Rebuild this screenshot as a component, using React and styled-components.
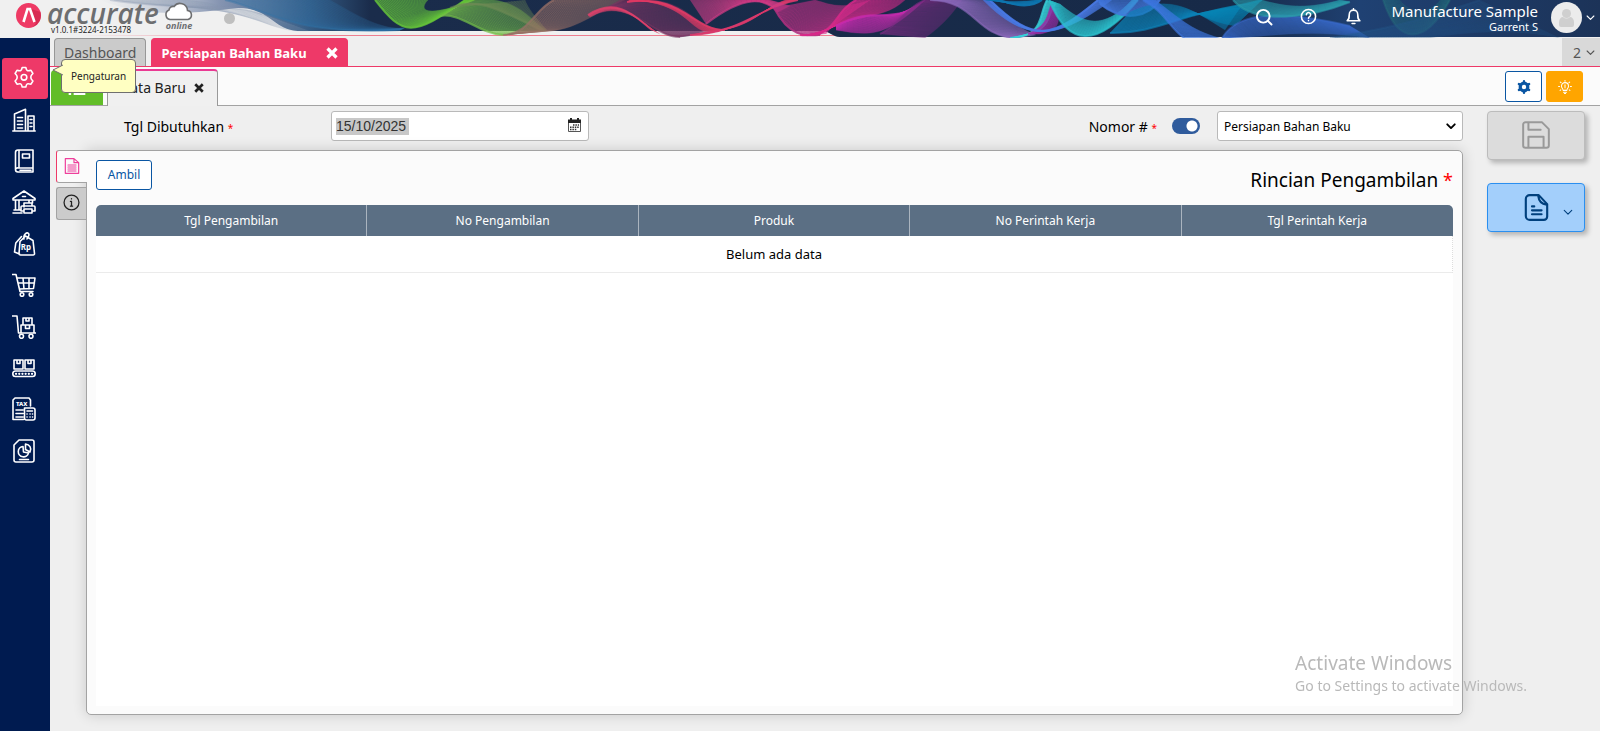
import React, { useState } from "react";
import styled, { createGlobalStyle } from "styled-components";

const colors = {
  navy: "#001b50",
  pink: "#ee3968",
  page: "#efefef",
  light: "#fbfbfb",
  line: "#a3a3a3",
  blue: "#0a56a3",
  slate: "#5b6f84",
};

const GlobalStyle = createGlobalStyle`
  * {
    box-sizing: border-box;
  }
  body {
    margin: 0;
    background: ${colors.page};
    font-family: "Noto Sans", "Open Sans", sans-serif;
    font-size: 14px;
    color: #000;
  }
  button, input, select {
    font: inherit;
    margin: 0;
  }
`;

/* ---------- header ---------- */

const Page = styled.div`
  min-height: 100vh;
  display: flex;
  flex-direction: column;
`;

const Header = styled.header`
  position: relative;
  height: 38px;
  display: flex;
  justify-content: space-between;
`;

const BannerArt = styled.svg`
  position: absolute;
  inset: 0;
  width: 100%;
  height: 38px;
`;

const Brand = styled.a`
  position: relative;
  display: flex;
  align-items: flex-start;
  padding: 3px 0 0 16px;
  color: #6d6e70;
  text-decoration: none;
`;

const BrandText = styled.div`
  padding-left: 5px;
  width: 120px;
`;

const BrandName = styled.div`
  font: italic 600 28px/22px "Open Sans", sans-serif;
  margin-top: -1px;
`;

const Version = styled.div`
  font-size: 8px;
  line-height: 12px;
  padding-left: 4px;
  color: #222;
`;

const BrandCloud = styled.div`
  width: 34px;
  display: flex;
  flex-direction: column;
  align-items: center;
  font: italic bold 9px/9px "Open Sans", sans-serif;
`;

const StatusDot = styled.span`
  width: 11px;
  height: 11px;
  margin: 10px 0 0 28px;
  border-radius: 50%;
  background: #bfbfbf;
`;

const HeaderTools = styled.div`
  position: relative;
  display: flex;
  align-items: center;
  padding-right: 5px;
  color: #fff;
`;

const ToolButton = styled.button`
  width: 45px;
  height: 32px;
  margin-bottom: 5px;
  padding: 0;
  display: grid;
  place-items: center;
  border: 0;
  background: none;
  color: #fff;
  cursor: pointer;
`;

const Account = styled.button`
  display: flex;
  align-items: center;
  gap: 13px;
  height: 38px;
  padding: 0 0 4px 15px;
  border: 0;
  background: none;
  color: #fff;
  text-align: right;
  cursor: pointer;
`;

const Company = styled.div`
  font-size: 15px;
  line-height: 18px;
`;

const UserName = styled.div`
  font-size: 11px;
  line-height: 13px;
`;

const AccountMenu = styled.span`
  display: flex;
  align-items: center;
  gap: 4px;
`;

/* ---------- sidebar ---------- */

const Body = styled.div`
  flex: 1;
  display: flex;
`;

const Sidebar = styled.nav`
  width: 50px;
  flex: none;
  padding: 20px 2px;
  background: ${colors.navy};
`;

const Menu = styled.ul`
  list-style: none;
  margin: 0;
  padding: 0;
  height: 414px;
  display: flex;
  flex-direction: column;
`;

const MenuItem = styled.li`
  position: relative;
  flex: 1;
  display: flex;
`;

const MenuLink = styled.a`
  flex: 1;
  display: grid;
  place-items: center;
  padding: 0 2px 1px 0;
  border-radius: 3px;
  color: #fff;
  background: ${({ $active }) => ($active ? colors.pink : "transparent")};
`;

const Tooltip = styled.div`
  position: absolute;
  z-index: 5;
  left: 59px;
  top: 1px;
  height: 34px;
  padding: 0 9px;
  border: 1px solid #6f6f6f;
  border-radius: 4px;
  background: #ffffc2;
  font-size: 10px;
  line-height: 32px;
  color: #222;

  svg {
    position: absolute;
    left: -10px;
    top: 4px;
  }
`;

/* ---------- tabs ---------- */

const Main = styled.main`
  flex: 1;
  min-width: 0;
  display: flex;
  flex-direction: column;
`;

const ModuleTabs = styled.div`
  height: 29px;
  display: flex;
  gap: 5px;
  padding-left: 4px;
  border-bottom: 1px solid ${colors.pink};
`;

const ModuleTab = styled.div`
  display: flex;
  align-items: center;
  gap: 19px;
  padding: 0 9px;
  border: 1px solid ${({ $active }) => ($active ? colors.pink : "#979797")};
  border-bottom: 0;
  border-radius: 4px 4px 0 0;
  background: ${({ $active }) => ($active ? colors.pink : "#cbcbcb")};
  color: ${({ $active }) => ($active ? "#fff" : "#555")};
  font-size: ${({ $active }) => ($active ? "13px" : "14px")};
  font-weight: ${({ $active }) => ($active ? 700 : 400)};
`;

const CloseButton = styled.button`
  display: grid;
  padding: 0;
  border: 0;
  background: none;
  color: inherit;
  cursor: pointer;
`;

const TabCount = styled.button`
  margin-left: auto;
  width: 38px;
  padding: 0 5px 0 0;
  display: flex;
  align-items: center;
  justify-content: flex-end;
  gap: 5px;
  border: 0;
  background: #d9d9d9;
  color: #555;
`;

const RecordTabs = styled.div`
  height: 39px;
  display: flex;
  align-items: flex-end;
  padding-left: 1px;
  background: ${colors.light};
  border-bottom: 1px solid ${colors.line};
`;

const ListButton = styled.button`
  width: 52px;
  height: 35px;
  padding: 0;
  display: grid;
  place-items: center;
  border: 0;
  border-radius: 4px 0 0 0;
  background: #62bd28;
  color: #fff;
`;

const RecordTab = styled.div`
  width: 111px;
  height: 37px;
  margin: 0 0 -1px 4px;
  padding: 0 13px 2px 12px;
  display: flex;
  align-items: center;
  justify-content: space-between;
  border: 1px solid #999;
  border-top: 2px solid #ea3a93;
  border-bottom: 0;
  border-radius: 0 4px 0 0;
  background: #f0f0f0;
  color: #222;
`;

const RecordTools = styled.div`
  margin-left: auto;
  padding: 0 17px 3px 0;
  display: flex;
  gap: 4px;
`;

const SquareButton = styled.button`
  width: 37px;
  height: 31px;
  padding: 0;
  display: grid;
  place-items: center;
  border: 1px solid ${({ $warm }) => ($warm ? "#ffa500" : colors.blue)};
  border-radius: 3px;
  background: ${({ $warm }) => ($warm ? "#ffa500" : "#fff")};
  color: ${({ $warm }) => ($warm ? "#fff" : colors.blue)};
`;

/* ---------- form ---------- */

const Workspace = styled.div`
  flex: 1;
  display: flex;
  gap: 24px;
  padding: 5px 15px 16px 6px;
`;

const Form = styled.form`
  flex: 1;
  min-width: 0;
  display: flex;
  flex-direction: column;
  gap: 9px;
`;

const FieldRow = styled.div`
  display: flex;
  align-items: center;
  height: 30px;
  padding-left: 68px;
`;

const FieldLabel = styled.label`
  width: ${({ $width }) => $width || "auto"};
`;

const Required = styled.span`
  color: #f00;
  font-size: ${({ $large }) => ($large ? "18px" : "10px")};
`;

const InputBox = styled.div`
  width: ${({ $width }) => $width};
  height: 30px;
  display: flex;
  align-items: center;
  border: 1px solid #b9b9b9;
  border-radius: 3px;
  background: #fff;
`;

const DateBox = styled(InputBox)`
  justify-content: space-between;
  padding: 0 7px 0 4px;
`;

const DateInput = styled.input`
  width: 73px;
  height: 17px;
  padding: 0;
  border: 0;
  outline: 0;
  background: #c8c8c8;
  color: #333;
  font: 14px/17px "Liberation Sans", Arial, sans-serif;
`;

const IconButton = styled.button`
  display: grid;
  padding: 0 0 2px;
  border: 0;
  background: none;
`;

const NumberField = styled.div`
  margin-left: auto;
  display: flex;
  align-items: center;
`;

const Switch = styled.input`
  appearance: none;
  width: 28px;
  height: 16px;
  margin: 0 17px 0 15px;
  border-radius: 8px;
  background: radial-gradient(circle at 20px 8px, #fff 5px, #2f5b9c 6px);
`;

const SelectBox = styled(InputBox)`
  position: relative;

  svg {
    position: absolute;
    right: 6px;
    pointer-events: none;
  }
`;

const Select = styled.select`
  appearance: none;
  flex: 1;
  height: 28px;
  padding: 0 24px 0 6px;
  border: 0;
  background: none;
  color: #000;
  font-size: 12px;
`;

const DetailArea = styled.div`
  flex: 1;
  display: flex;
`;

const SideTabs = styled.div`
  width: 30px;
  display: flex;
  flex-direction: column;
  gap: 4px;
`;

const SideTab = styled.button`
  position: relative;
  z-index: ${({ $active }) => ($active ? 1 : 0)};
  height: 33px;
  width: ${({ $active }) => ($active ? "31px" : "30px")};
  padding: 0 1px 2px 0;
  display: grid;
  place-items: center;
  border: 1px solid ${colors.line};
  border-left-color: ${({ $active }) => ($active ? colors.pink : colors.line)};
  border-right: 0;
  border-radius: 3px 0 0 3px;
  background: ${({ $active }) => ($active ? colors.light : "#cbcbcb")};
  color: ${({ $active }) => ($active ? "#ee3f9b" : "#222")};
`;

const Panel = styled.section`
  flex: 1;
  padding: 9px 9px 8px;
  display: flex;
  flex-direction: column;
  border: 1px solid ${colors.line};
  border-radius: 0 5px 5px 5px;
  background: ${colors.light};
  box-shadow: 0 0 14px rgba(0, 0, 0, 0.16);
`;

const PanelHead = styled.div`
  height: 45px;
  display: flex;
  justify-content: space-between;
  align-items: flex-start;
`;

const TakeButton = styled.button`
  height: 30px;
  width: 56px;
  padding: 0 0 2px;
  border: 1px solid ${colors.blue};
  border-radius: 3px;
  background: #fff;
  color: ${colors.blue};
  font-size: 12px;
`;

const PanelTitle = styled.h2`
  margin: 6px 0 0;
  font-size: 19px;
  line-height: 28px;
  font-weight: 400;
`;

const TableArea = styled.div`
  flex: 1;
  background: #fff;
`;

const Table = styled.table`
  width: 100%;
  table-layout: fixed;
  border-collapse: separate;
  border-spacing: 0;
`;

const HeadCell = styled.th`
  height: 31px;
  padding: 0;
  background: ${colors.slate};
  color: #fff;
  font-size: 12px;
  font-weight: 400;
  border-right: 1px solid #aab4bf;

  &:first-child {
    border-top-left-radius: 5px;
  }
  &:last-child {
    border-right: 0;
    border-top-right-radius: 5px;
  }
`;

const EmptyCell = styled.td`
  height: 37px;
  padding: 0;
  text-align: center;
  font-size: 13px;
  border-bottom: 1px solid #ebebeb;
  border-right: 1px dotted #ddd;
`;

const Actions = styled.aside`
  width: 98px;
  display: flex;
  flex-direction: column;
  gap: 23px;
`;

const ActionButton = styled.button`
  height: 49px;
  padding: 0 0 1px;
  display: grid;
  grid-template-columns: 1fr 28px 1fr;
  align-items: center;
  justify-items: center;
  border: 1px solid ${({ $primary }) => ($primary ? "#2a8ff0" : "#bcbcbc")};
  border-radius: 4px;
  background: ${({ $primary }) => ($primary ? "#a3cffb" : "#dcdcdc")};
  color: ${({ $primary }) => ($primary ? "#00407d" : "#999")};
  box-shadow: 3px 3px 5px rgba(0, 0, 0, 0.25);

  svg:first-child {
    grid-column: 2;
  }
  svg:nth-child(2) {
    margin: 10px 0 0 2px;
  }
`;

const Watermark = styled.div`
  position: fixed;
  right: 73px;
  bottom: 34px;
  color: #b9b9b9;
  font-size: 14px;
  line-height: 22px;
  pointer-events: none;
`;

const WatermarkTitle = styled.div`
  font-size: 19px;
  line-height: 24px;
`;

/* ---------- icons ---------- */

const Icon = ({ size = 24, width = 1.6, children, ...rest }) => (
  <svg
    width={size}
    height={size}
    viewBox="0 0 24 24"
    fill="none"
    stroke="currentColor"
    strokeWidth={width}
    strokeLinecap="round"
    strokeLinejoin="round"
    aria-hidden="true"
    {...rest}
  >
    {children}
  </svg>
);

const Chevron = ({ size = 10, width = 3 }) => (
  <Icon size={size} width={width}>
    <path d="M3 8l9 9 9-9" />
  </Icon>
);

const Cross = ({ size = 12 }) => (
  <Icon size={size} width={6.5} strokeLinecap="butt">
    <path d="M3 3l18 18M21 3L3 21" />
  </Icon>
);

const menu = [
  {
    name: "Pengaturan",
    icon: (
      <>
        <path d="M10.200 1.500h3.600q.6 2.600 1.500 3.100t3.700-.3l1.900 3.200q-2 2-2 3v1.500q0 1 2 3L19 18.200q-2.800-.8-3.700-.3t-1.500 3.100h-3.600q-.6-2.600-1.500-3.100t-3.700.3L3.100 15q2-2 2-3v-1.500q0-1-2-3L5 4.300q2.800.8 3.700.3t1.500-3.100z" />
        <circle cx="12" cy="11.300" r="2.800" />
      </>
    ),
  },
  {
    name: "Perusahaan",
    icon: <path d="M.8 23h22.400M2.500 23V6l11-4.700V23M16 8h6v15M16 8v15M5.500 9.500h5M5.500 13h5M5.500 16.500h5M5.500 20h5M18 11.500h2M18 15h2M18 18.500h2" />,
  },
  {
    name: "Buku Besar",
    icon: <path d="M6 1h15v22H6a2.500 2.500 0 0 1-2.500-2.500V3.500A2.500 2.500 0 0 1 6 1zM7 1v18M3.500 20.500A2 2 0 0 1 6 19h15M10.500 5h7v4h-7zM8 21.200h11" />,
  },
  {
    name: "Kas & Bank",
    icon: <path d="M1 8.500L12 1l11 7.500v1.500H1zM10.500 6.500h3M3.500 10v10M7 10v10M1 23h9M2 20h6M17 10v3M20.500 10v3M12 17v-4h8v3M10 16h12a1 1 0 0 1 1 1v4h-3M10 16a1 1 0 0 0-1 1v4h3M12 19h8v4h-8z" />,
  },
  {
    name: "Penjualan",
    icon: (
      <>
        <path d="M8 9.500L13.500 4l7.500 4.500 1.500 13A1.300 1.300 0 0 1 21.200 23H8.500A1.500 1.500 0 0 1 7 21.500zM7.500 22L2.500 20l1.300-9 5.700-6.500M12 7c-1-5 3-7 4.500-5.500S16 5 15 7" />
        <text x="8.800" y="17.800" fontSize="8" fontWeight="700" fill="currentColor" stroke="none">Rp</text>
      </>
    ),
  },
  {
    name: "Pembelian",
    icon: <><path d="M.5 1.500h3.500L8 18.500h13M5 5h18l-1.500 10.500L7.500 16M6 10h16.500M11 5l1 11M17 5v11" /><circle cx="10" cy="21.500" r="1.800" /><circle cx="19" cy="21.500" r="1.800" /></>,
  },
  {
    name: "Persediaan",
    icon: <><path d="M.5 1h4.500l1.500 17h17M9 10h13v8H9zM11 3h9v7h-9zM14 3v3h3V3M13.500 10v3.500h4V10" /><circle cx="9.500" cy="21.300" r="2" /><circle cx="19" cy="21.300" r="2" /></>,
  },
  {
    name: "Manufaktur",
    icon: <><path d="M2 4h9v9H2zM13 4h9v9h-9zM5 4v3.500h3V4M16 4v3.500h3V4" /><rect x=".8" y="15" width="22.400" height="5.500" rx="2.700" /><path d="M4 17.800h.1M7.200 17.800h.1M10.400 17.800h.1M13.600 17.800h.1M16.800 17.800h.1M20 17.800h.1" strokeWidth="2.200" /></>,
  },
  {
    name: "Pajak",
    icon: (
      <>
        <path d="M11.500 22.500H1V3l2-2h14l1.500 2v6M4 13h7M4 16.500h7M4 20h7M12.500 11H21a2 2 0 0 1 2 2v8a2 2 0 0 1-2 2h-6.500a2 2 0 0 1-2-2zM15 14h5.500M15 17h.1M18 17h.1M20.500 17h.1M15 20h.1M18 20h.1M20.500 20h.1" />
        <text x="4" y="8.800" fontSize="6" fontWeight="800" fill="currentColor" stroke="none">TAX</text>
      </>
    ),
  },
  {
    name: "Laporan",
    icon: <path d="M7 1h13a2 2 0 0 1 2 2v18a2 2 0 0 1-2 2H4a2 2 0 0 1-2-2V6zM11 7.500a5.200 5.200 0 1 0 5.500 6.500L11.500 13zM13.500 5v5.500l4.500 2.500c2-4-.5-7.500-4.500-8zM7.500 20.500h9" />,
  },
];

/* ---------- banner ---------- */

// Every ribbon is a fan of curves blended from the first edge to the last.
const ribbons = [
  { from: [110, 0, 190, 12, 230, 2, 262, 14], to: [185, 0, 250, 4, 262, 34, 310, 31], color: "#8796ae", n: 10, o: 0.3 },
  { from: [225, 0, 270, 10, 290, 36, 400, 30], to: [330, 0, 355, 14, 380, 30, 405, 28], color: "#2f72a8", n: 14, o: 0.4 },
  { from: [375, 0, 403, 36, 412, 38, 465, 0], to: [428, 0, 420, 8, 420, 20, 475, 0], color: "#66c53a", n: 16, o: 0.8 },
  { from: [440, 16, 460, 12, 480, 34, 503, 35], to: [470, 0, 520, -6, 532, 24, 547, 31], color: "#74bd48", n: 15, o: 0.7 },
  { from: [450, 8, 475, -4, 500, 10, 540, 30], to: [525, 0, 528, 8, 534, 16, 547, 30], color: "#6d8a55", n: 14, o: 0.55 },
  { from: [503, 35, 530, 34, 535, 8, 554, 0], to: [535, 31, 575, 34, 590, 14, 625, 0], color: "#9a7166", n: 16, o: 0.7 },
  { from: [593, 15, 625, -8, 650, 37, 680, 37], to: [620, 0, 690, -8, 690, 28, 725, 30], color: "#7b3563", n: 18, o: 0.6 },
  { from: [588, 15, 620, -6, 640, 22, 652, 30], to: [590, 17, 622, 0, 640, 22, 660, 34], color: "#e0416b", n: 4, o: 0.8 },
  { from: [627, 2, 685, -6, 690, 29, 725, 30], to: [630, 0, 690, 2, 690, 36, 712, 31], color: "#e23b66", n: 5, o: 0.85 },
  { from: [690, 35, 745, 32, 760, 6, 798, 0], to: [720, 30, 755, 26, 765, 6, 786, 0], color: "#d93a6c", n: 9, o: 0.85 },
  { from: [706, 24, 745, -6, 765, -2, 778, 12], to: [690, 0, 745, -8, 765, -2, 790, 6], color: "#cf3c85", n: 15, o: 0.7 },
  { from: [774, 8, 790, 38, 806, 36, 820, 35], to: [815, 0, 830, 4, 840, 10, 870, 0], color: "#b0307f", n: 22, o: 0.85 },
  { from: [800, 35, 838, 38, 832, 12, 856, 0], to: [826, 34, 840, 12, 880, 24, 905, 0], color: "#d8298a", n: 18, o: 0.8 },
  { from: [836, 26, 870, 8, 880, 20, 905, 12], to: [836, 30, 870, 36, 885, 38, 925, 0], color: "#c32bac", n: 13, o: 0.8 },
  { from: [880, 34, 900, 24, 905, 8, 925, 0], to: [925, 38, 945, 24, 955, 10, 962, 0], color: "#7d2d83", n: 24, o: 0.6 },
  { from: [930, 0, 975, 0, 975, 36, 1015, 38], to: [985, 0, 1003, 12, 1012, 26, 1036, 35], color: "#8968b8", n: 28, o: 0.65 },
  { from: [1010, 38, 1045, 36, 1038, 16, 1047, 0], to: [1028, 34, 1052, 30, 1048, 14, 1056, 4], color: "#38cfd8", n: 11, o: 0.8 },
  { from: [1028, 34, 1050, 26, 1048, 12, 1052, 4], to: [1040, 34, 1062, 30, 1062, 18, 1052, 4], color: "#9a2da5", n: 10, o: 0.8 },
  { from: [990, 0, 1035, 44, 1052, 38, 1098, 0], to: [983, 0, 1030, 48, 1062, 36, 1112, 0], color: "#4a7be6", n: 8, o: 0.9 },
  { from: [1049, 0, 1068, 46, 1096, 50, 1138, 0], to: [1060, 4, 1080, 20, 1100, 34, 1132, 0], color: "#2cc1cd", n: 20, o: 0.7 },
  { from: [1000, 0, 1020, 8, 1034, 6, 1042, 0], to: [985, 0, 1005, 2, 1020, 2, 1040, 0], color: "#0f76b0", n: 8, o: 0.9 },
  { from: [1100, 4, 1125, 24, 1150, 16, 1160, 0], to: [1098, 0, 1115, 0, 1140, 0, 1150, 0], color: "#4378dc", n: 13, o: 0.8 },
  { from: [1110, 33, 1160, 34, 1185, 10, 1240, 8], to: [1130, 12, 1170, -6, 1190, 8, 1225, 30], color: "#0d83b8", n: 20, o: 0.65 },
  { from: [1143, 0, 1165, 12, 1168, 26, 1184, 38], to: [1155, 0, 1180, 18, 1190, 30, 1220, 38], color: "#3f78e0", n: 18, o: 0.65 },
  { from: [1200, 14, 1220, 8, 1240, 6, 1262, 0], to: [1200, 14, 1212, 22, 1225, 24, 1235, 26], color: "#0784b3", n: 14, o: 0.8 },
  { from: [1222, 38, 1240, 8, 1290, 12, 1350, 26], to: [1230, 38, 1265, 38, 1300, 28, 1370, 38], color: "#3a6ccd", n: 22, o: 0.5 },
  { from: [1233, 0, 1255, 26, 1310, 18, 1350, 2], to: [1262, 0, 1290, 8, 1310, 8, 1340, 0], color: "#2c9cab", n: 18, o: 0.6 },
  { from: [1383, 0, 1398, 46, 1425, 46, 1450, 0], to: [1400, 0, 1410, 14, 1430, 14, 1440, 0], color: "#28757f", n: 18, o: 0.35 },
  { from: [1330, 38, 1400, 26, 1420, 20, 1480, 0], to: [1430, 38, 1480, 30, 1520, 30, 1560, 38], color: "#25588c", n: 22, o: 0.3 },
];

const blend = (a, b, t) => a.map((v, i) => v + (b[i] - v) * t);
const curve = ([x1, y1, x2, y2, x3, y3, x4, y4]) => `M${x1} ${y1}C${x2} ${y2} ${x3} ${y3} ${x4} ${y4}`;
const area = (a, b) => `${curve(a)}L${b[6]} ${b[7]}C${b[4]} ${b[5]} ${b[2]} ${b[3]} ${b[0]} ${b[1]}Z`;

const Banner = () => (
  <BannerArt viewBox="0 0 1600 38" preserveAspectRatio="none" aria-hidden="true">
    <defs>
      <linearGradient id="sky" gradientUnits="userSpaceOnUse" x1="100" x2="1600" y1="0" y2="0">
        <stop offset="0" stopColor="#b9c2d2" stopOpacity="0" />
        <stop offset=".08" stopColor="#8594b1" />
        <stop offset=".14" stopColor="#355c85" />
        <stop offset=".18" stopColor="#1a2c4b" />
        <stop offset=".76" stopColor="#172a48" />
        <stop offset=".84" stopColor="#1f4173" />
        <stop offset="1" stopColor="#1c3358" />
      </linearGradient>
      <linearGradient id="rule" gradientUnits="userSpaceOnUse" x1="80" x2="300" y1="0" y2="0">
        <stop offset="0" stopColor="#ee7f90" stopOpacity="0" />
        <stop offset="1" stopColor="#ee7f90" />
      </linearGradient>
    </defs>
    <rect width="1600" height="38" fill="#f0f0f0" />
    <rect x="80" y="35" width="756" height="1" fill="url(#rule)" />
    <path d="M100 0C150 20 200 12 238 8C272 8 272 31 302 31H822C830 31 832 37 840 37H1600V0Z" fill="url(#sky)" />
    <path d="M660 31H704L690 36Q676 39 665 34Z" fill="#6b5a7d" opacity=".7" />
    {ribbons.map((r) => (
      <g key={r.from.join()} stroke={r.color} fill="none">
        <path d={area(r.from, r.to)} fill={r.color} stroke="none" opacity={r.o * 0.6} />
        {Array.from({ length: r.n * 2 }, (_, i) => (
          <path
            key={i}
            d={curve(blend(r.from, r.to, i / (r.n * 2 - 1)))}
            strokeWidth={i === 0 ? 2 : 0.7}
            opacity={r.o * (1 - i / (r.n * 3))}
          />
        ))}
      </g>
    ))}
  </BannerArt>
);

const columns = ["Tgl Pengambilan", "No Pengambilan", "Produk", "No Perintah Kerja", "Tgl Perintah Kerja"];

export default function App() {
  const [date, setDate] = useState("15/10/2025");
  const [auto, setAuto] = useState(true);

  return (
    <Page>
      <GlobalStyle />
      <Header>
        <Banner />
        <Brand href="#" aria-label="Accurate Online">
          <svg width="26" height="26" viewBox="0 0 26 26" aria-hidden="true">
            <circle cx="12.500" cy="12.500" r="12.500" fill="#ee3a64" />
            <path d="M12 5l8 15-3 4A12.500 12.500 0 0 0 24.500 9z" fill="#c92247" opacity=".6" />
            <path d="M7.500 19L11.500 6h2.500L18.500 19" fill="none" stroke="#fff" strokeWidth="2.600" />
          </svg>
          <BrandText>
            <BrandName>accurate</BrandName>
            <Version>v1.0.1#3224-2153478</Version>
          </BrandText>
          <BrandCloud>
            <svg width="32" height="18" viewBox="0 0 32 18" overflow="visible" aria-hidden="true">
              <path
                d="M7 16.500a5 5 0 0 1-1-9.500 4 4 0 0 1 5-3.500 7.500 7.500 0 0 1 13.500 4A4.600 4.600 0 0 1 25 16.500z"
                fill="#fff"
                stroke="#6d6e70"
                strokeWidth="1.600"
              />
            </svg>
            online
          </BrandCloud>
          <StatusDot />
        </Brand>
        <HeaderTools>
          <ToolButton aria-label="Cari" type="button">
            <Icon size={18} width={2.6}>
              <circle cx="11" cy="11" r="8.500" />
              <path d="M17.500 17.500L22 22" />
            </Icon>
          </ToolButton>
          <ToolButton aria-label="Bantuan" type="button">
            <Icon size={17} width={2.2}>
              <circle cx="12" cy="12" r="10" />
              <path d="M9 9.500a3 3 0 1 1 4.500 2.600c-1 .6-1.500 1-1.500 2.200M12 17.600v.2" />
            </Icon>
          </ToolButton>
          <ToolButton aria-label="Notifikasi" type="button">
            <Icon size={17} width={2.2}>
              <path d="M3 18c3-2.500 3-4 3-9a6 6 0 0 1 12 0c0 5 0 6.500 3 9zM12 1v2M10 22h4" />
            </Icon>
          </ToolButton>
          <Account type="button">
            <div>
              <Company>Manufacture Sample</Company>
              <UserName>Garrent S</UserName>
            </div>
            <AccountMenu>
              <svg width="31" height="31" viewBox="0 0 31 31" aria-hidden="true">
                <circle cx="15.500" cy="15.500" r="15.500" fill="#ececec" />
                <circle cx="15.500" cy="11.500" r="4.500" fill="#cfcfcf" />
                <path d="M8 23v-3c0-3 2-5 4-5q3.500 3 7 0c2 0 4 2 4 5v3q0 2-2 2H10q-2 0-2-2z" fill="#cfcfcf" />
              </svg>
              <Chevron size={9} />
            </AccountMenu>
          </Account>
        </HeaderTools>
      </Header>

      <Body>
        <Sidebar>
          <Menu>
            {menu.map(({ name, icon }, i) => (
              <MenuItem key={name}>
                <MenuLink href="#" aria-label={name} $active={i === 0}>
                  <Icon>{icon}</Icon>
                </MenuLink>
                {i === 0 && (
                  <Tooltip role="tooltip">
                    <svg width="11" height="12" viewBox="0 0 11 12" aria-hidden="true">
                      <path d="M11 1L1 6l10 5" fill="#ffffc2" stroke="#6f6f6f" />
                    </svg>
                    {name}
                  </Tooltip>
                )}
              </MenuItem>
            ))}
          </Menu>
        </Sidebar>

        <Main>
          <ModuleTabs>
            <ModuleTab>Dashboard</ModuleTab>
            <ModuleTab $active>
              Persiapan Bahan Baku
              <CloseButton type="button" aria-label="Tutup Persiapan Bahan Baku">
                <Cross />
              </CloseButton>
            </ModuleTab>
            <TabCount type="button">
              2 <Chevron size={9} />
            </TabCount>
          </ModuleTabs>
          <RecordTabs>
            <ListButton type="button" aria-label="Daftar">
              <Icon size={20} width={3} strokeLinecap="butt">
                <path d="M2 5h3M8 5h14M2 12h3M8 12h14M2 19h3M8 19h14" />
              </Icon>
            </ListButton>
            <RecordTab>
              Data Baru
              <CloseButton type="button" aria-label="Tutup Data Baru">
                <Cross size={10} />
              </CloseButton>
            </RecordTab>
            <RecordTools>
              <SquareButton type="button" aria-label="Atur tampilan">
                <Icon size={14} width={4}>
                  <circle cx="12" cy="12" r="6.500" strokeWidth="5.500" />
                  <path d="M12 2v2M12 20v2M3.300 7l2 1M18.700 16l2 1M3.300 17l2-1M18.700 8l2-1" />
                </Icon>
              </SquareButton>
              <SquareButton $warm type="button" aria-label="Panduan">
                <Icon size={14} width={1.8}>
                  <path d="M9 18c0-3-3-4-3-7.500a6 6 0 0 1 12 0C18 14 15 15 15 18zM9.500 21h5M11 23.200h2M12 8v5M12 15.500v.2M12 .8v1.500M1 11h1.700M21.300 11H23M4 3.500l1.200 1.200M20 3.500l-1.200 1.200M3.500 18l1.200-1.200M20.500 18l-1.200-1.200" />
                </Icon>
              </SquareButton>
            </RecordTools>
          </RecordTabs>

          <Workspace>
            <Form onSubmit={(e) => e.preventDefault()}>
              <FieldRow>
                <FieldLabel htmlFor="date" $width="207px">
                  Tgl Dibutuhkan <Required>*</Required>
                </FieldLabel>
                <DateBox $width="258px">
                  <DateInput id="date" value={date} onChange={(e) => setDate(e.target.value)} />
                  <IconButton type="button" aria-label="Pilih tanggal">
                    <svg width="13" height="14" viewBox="0 0 13 14" aria-hidden="true">
                      <path d="M.5 2.500h12v11H.5z" fill="#fff" stroke="#555" />
                      <path d="M0 1.500h2V0h2v1.500h5V0h2v1.500h2V5H0z" fill="#222" />
                      <path d="M5 7h6M2 9.300h9M2 11.600h7" stroke="#333" strokeWidth="1.500" strokeDasharray="1.500 .9" />
                    </svg>
                  </IconButton>
                </DateBox>
                <NumberField>
                  <FieldLabel htmlFor="series">
                    Nomor # <Required>*</Required>
                  </FieldLabel>
                  <Switch
                    type="checkbox"
                    role="switch"
                    aria-label="Nomor otomatis"
                    checked={auto}
                    onChange={() => setAuto(!auto)}
                  />
                  <SelectBox $width="246px">
                    <Select id="series">
                      <option>Persiapan Bahan Baku</option>
                    </Select>
                    <Chevron size={10} width={4.5} />
                  </SelectBox>
                </NumberField>
              </FieldRow>

              <DetailArea>
                <SideTabs>
                  <SideTab $active type="button" aria-label="Rincian">
                    <Icon size={16} width={1.8}>
                      <path d="M2 1h13l7 6v16H2zM15 1v6h7M6 10.500h12M6 13.500h12M6 16.500h12M6 19.500h12" />
                    </Icon>
                  </SideTab>
                  <SideTab type="button" aria-label="Info lainnya">
                    <Icon size={17} width={1.8}>
                      <circle cx="12" cy="12" r="10.500" />
                      <path d="M10.500 10.500H12V17M10.500 17.200h3M12 6.500v.5" />
                    </Icon>
                  </SideTab>
                </SideTabs>
                <Panel>
                  <PanelHead>
                    <TakeButton type="button">Ambil</TakeButton>
                    <PanelTitle>
                      Rincian Pengambilan <Required $large>*</Required>
                    </PanelTitle>
                  </PanelHead>
                  <TableArea>
                    <Table>
                      <thead>
                        <tr>
                          {columns.map((name) => (
                            <HeadCell key={name}>{name}</HeadCell>
                          ))}
                        </tr>
                      </thead>
                      <tbody>
                        <tr>
                          <EmptyCell colSpan={columns.length}>Belum ada data</EmptyCell>
                        </tr>
                      </tbody>
                    </Table>
                  </TableArea>
                </Panel>
              </DetailArea>
            </Form>

            <Actions>
              <ActionButton type="button" aria-label="Simpan" disabled>
                <Icon size={28} width={1.7}>
                  <path d="M3 1h14l6 6v14a2 2 0 0 1-2 2H3a2 2 0 0 1-2-2V3a2 2 0 0 1 2-2zM5.500 1v6.500H16M5.500 23v-9.500h13V23" />
                </Icon>
              </ActionButton>
              <ActionButton $primary type="button" aria-label="Dokumen">
                <Icon size={27} width={1.9}>
                  <path d="M6 1h8l7.500 8v11a3 3 0 0 1-3 3H6a3.500 3.500 0 0 1-3.500-3.500v-15A3.500 3.500 0 0 1 6 1zM13.500 1.500C14 6 15.500 9 21 9.500M8 11h2M8 14.500h8.500M8 18h8.500" />
                </Icon>
                <Chevron size={10} width={2.6} />
              </ActionButton>
            </Actions>
          </Workspace>
        </Main>
      </Body>

      <Watermark>
        <WatermarkTitle>Activate Windows</WatermarkTitle>
        Go to Settings to activate Windows.
      </Watermark>
    </Page>
  );
}
